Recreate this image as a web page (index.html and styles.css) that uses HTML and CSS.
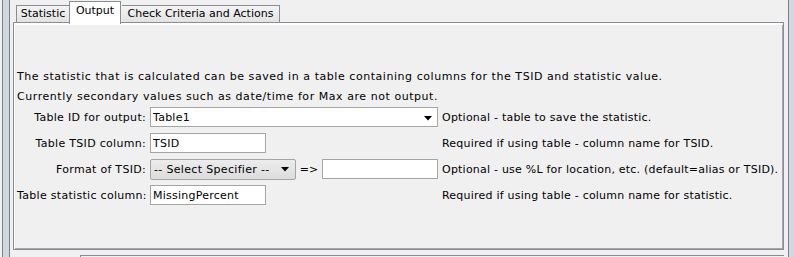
FILE: index.html
```html
<!DOCTYPE html>
<html lang="en">
<head>
    <meta charset="UTF-8">
    <title>Output</title>
    <link rel="stylesheet" href="styles.css">
</head>
<body>
<div class="window">
    <div class="rail rail-left"></div>
    <div class="main">
        <div class="tabs">
            <div class="tab tab-statistic">Statistic</div>
            <div class="tab tab-output selected">Output</div>
            <div class="tab tab-check">Check Criteria and Actions</div>
        </div>
        <div class="panel">
            <div class="intro">
                <div>The statistic that is calculated can be saved in a table containing columns for the TSID and statistic value.</div>
                <div>Currently secondary values such as date/time for Max are not output.</div>
            </div>
            <div class="form-grid">
                <label class="field-label">Table ID for output:</label>
                <div class="combo">
                    <input type="text" class="combo-input" value="Table1">
                    <svg class="arrow" width="8" height="5" viewBox="0 0 8 5"><path d="M0 0H8L4 4.5Z" fill="#000"/></svg>
                </div>
                <div class="note">Optional - table to save the statistic.</div>

                <label class="field-label">Table TSID column:</label>
                <div><input type="text" class="text-field" value="TSID"></div>
                <div class="note">Required if using table - column name for TSID.</div>

                <label class="field-label">Format of TSID:</label>
                <div class="format-row">
                    <div class="specifier">
                        <span>-- Select Specifier --</span>
                        <svg class="arrow" width="8" height="5" viewBox="0 0 8 5"><path d="M0 0H8L4 4.5Z" fill="#000"/></svg>
                    </div>
                    <span class="insert">=&gt;</span>
                    <input type="text" class="text-field" value="">
                </div>
                <div class="note">Optional - use %L for location, etc. (default=alias or TSID).</div>

                <label class="field-label">Table statistic column:</label>
                <div><input type="text" class="text-field" value="MissingPercent"></div>
                <div class="note">Required if using table - column name for statistic.</div>
            </div>
        </div>
        <div class="lower-box"></div>
    </div>
    <div class="rail rail-right"></div>
</div>
</body>
</html>
```

FILE: styles.css
```css
body {
    margin: 0;
    background-color: #f0f0f0;
    font-family: "DejaVu Sans", sans-serif;
    font-size: 11px;
    color: #000;
}

.window {
    display: flex;
    height: 257px;
    overflow: hidden;
}

.rail {
    background-color: #d3d7df;
    border-left: 1px solid #7b7e85;
}

.rail-left {
    margin-left: 2px;
    width: 6px;
    border-right: 1px solid #7b7e85;
}

.rail-right {
    margin-left: 4px;
    width: 5px;
}

.main {
    flex: 1;
    margin-left: 3px;
    display: flex;
    flex-direction: column;
}

.main > div {
    flex-shrink: 0;
}

/* tabs */
.tabs {
    display: flex;
    align-items: flex-end;
    height: 22px;
    padding-left: 3px;
}

.tab {
    box-sizing: border-box;
    height: 17px;
    line-height: 15px;
    text-align: center;
    border: 1px solid #898c93;
    border-bottom: none;
    background: linear-gradient(#f4f4f4, #e2e2e2);
    white-space: nowrap;
}

.tab-statistic {
    width: 53px;
    border-right: none;
}

.tab-output {
    width: 52px;
}

.tab-check {
    width: 158px;
    border-left: none;
    margin-left: 1px;
}

.tab.selected {
    position: relative;
    z-index: 1;
    height: 23px;
    margin-bottom: -2px;
    line-height: 18px;
    background: #fff;
}

/* panel */
.panel {
    box-sizing: border-box;
    height: 228px;
    border: 1px solid #898c93;
    box-shadow: inset 1px 2px 0 #fff, inset -1px -1px 0 #a4a6ab;
    padding: 44px 0 0 3px;
}

.intro {
    line-height: 20px;
    letter-spacing: 0.55px;
    white-space: nowrap;
}

.form-grid {
    display: grid;
    grid-template-columns: 129px 288px 1fr;
    grid-auto-rows: 20px;
    column-gap: 4px;
    row-gap: 6px;
    align-items: center;
}

.field-label {
    text-align: right;
    white-space: nowrap;
    letter-spacing: 0.3px;
}

.note {
    white-space: nowrap;
    letter-spacing: 0.22px;
}

.text-field {
    box-sizing: border-box;
    width: 116px;
    height: 20px;
    margin: 0;
    padding: 0 2px;
    border: 1px solid #a5a5a5;
    background: #fff;
    font-family: inherit;
    font-size: 11px;
    letter-spacing: 0.25px;
    color: #000;
    outline: none;
}

.combo {
    box-sizing: border-box;
    display: flex;
    align-items: center;
    height: 20px;
    border: 1px solid #a5a5a5;
    background: #fff;
}

.combo-input {
    flex: 1;
    min-width: 0;
    height: 18px;
    border: none;
    padding: 0 2px;
    font-family: inherit;
    font-size: 11px;
    letter-spacing: 0.25px;
    color: #000;
    outline: none;
}

.combo .arrow {
    margin: 2px 5px 0 0;
}

.format-row {
    display: flex;
    align-items: center;
}

.specifier {
    box-sizing: border-box;
    display: flex;
    align-items: center;
    justify-content: space-between;
    width: 146px;
    height: 21px;
    padding: 0 6px 0 3px;
    border: 1px solid #a5a5a5;
    border-radius: 2px;
    background: linear-gradient(#ececec, #dcdcdc);
    white-space: nowrap;
    letter-spacing: 0.33px;
}

.insert {
    flex: 1;
    text-align: center;
}

.lower-box {
    height: 20px;
    margin: 5px 0 0 67px;
    border-top: 1px solid #898c93;
    border-left: 1px solid #898c93;
}
```
